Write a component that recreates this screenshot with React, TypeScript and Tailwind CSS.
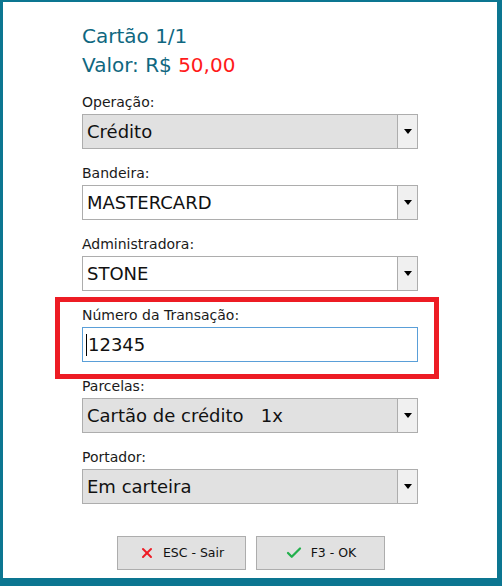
import { Check, X } from "lucide-react";

const font = { fontFamily: '"DejaVu Sans", Tahoma, sans-serif' };

function Arrow() {
    return (
        <div className="flex h-full w-[20px] items-center justify-center border-l border-[#adadad] bg-[#f0f0f0]">
            <svg width="8" height="5" viewBox="0 0 8 5">
                <path d="M0 0 L8 0 L4 5 Z" fill="#000" />
            </svg>
        </div>
    );
}

function Combo({ label, value, gray }: { label: string; value: string; gray?: boolean }) {
    return (
        <div className="flex flex-col">
            <div className="h-[20px] text-[14px] leading-[20px] text-[#1a1a1a]">{label}</div>
            <div
                className={`mt-[2px] flex h-[35px] w-[336px] items-stretch border border-[#adadad] ${gray ? 'bg-[#e1e1e1]' : 'bg-white'}`}
            >
                <div className="flex flex-1 items-center whitespace-pre pl-[4px] text-[18px] text-[#111]">{value}</div>
                <Arrow />
            </div>
        </div>
    );
}

export default function App() {
    return (
        <div className="h-[586px] w-[502px] overflow-hidden bg-[#0c7691] pb-[8px] pl-[3px] pr-[5px] pt-[2px]" style={font}>
            <div className="relative h-full w-full bg-white pl-[79px] pt-[20px]">
                <div className="text-[20px] leading-[29px] text-[#0f6780]">
                    <div>Cartão 1/1</div>
                    <div>
                        Valor: R$ <span className="text-[#ff1a1a]">50,00</span>
                    </div>
                </div>

                <div className="mt-[12px] flex flex-col gap-[14px]">
                    <Combo label="Operação:" value="Crédito" gray />
                    <Combo label="Bandeira:" value="MASTERCARD" />
                    <Combo label="Administradora:" value="STONE" />
                    <div className="flex flex-col">
                        <div className="h-[20px] text-[14px] leading-[20px] text-[#1a1a1a]">Número da Transação:</div>
                        <div className="mt-[2px] flex h-[35px] w-[336px] items-center border border-[#5a9fd8] bg-white pl-[3px] text-[18px] text-[#111]">
                            <span className="mr-[1px] h-[22px] w-[1px] bg-black" />
                            12345
                        </div>
                    </div>
                    <Combo label="Parcelas:" value="Cartão de crédito   1x" gray />
                    <Combo label="Portador:" value="Em carteira" gray />
                </div>

                <div className="mt-[32px] flex gap-[10px] pl-[35px]">
                    <button className="flex h-[34px] w-[129px] items-center justify-center gap-[8px] border border-[#adadad] bg-[#e1e1e1] text-[12.5px] text-[#111]">
                        <X size={16} strokeWidth={3} color="#ee1c25" />
                        ESC - Sair
                    </button>
                    <button className="flex h-[34px] w-[129px] items-center justify-center gap-[8px] border border-[#adadad] bg-[#e1e1e1] text-[12.5px] text-[#111]">
                        <Check size={18} strokeWidth={3} color="#22b04c" />
                        F3 - OK
                    </button>
                </div>

                <div className="pointer-events-none absolute left-[52px] top-[295px] h-[82px] w-[384px] border-[5px] border-[#ed1c24]" />
            </div>
        </div>
    );
}
